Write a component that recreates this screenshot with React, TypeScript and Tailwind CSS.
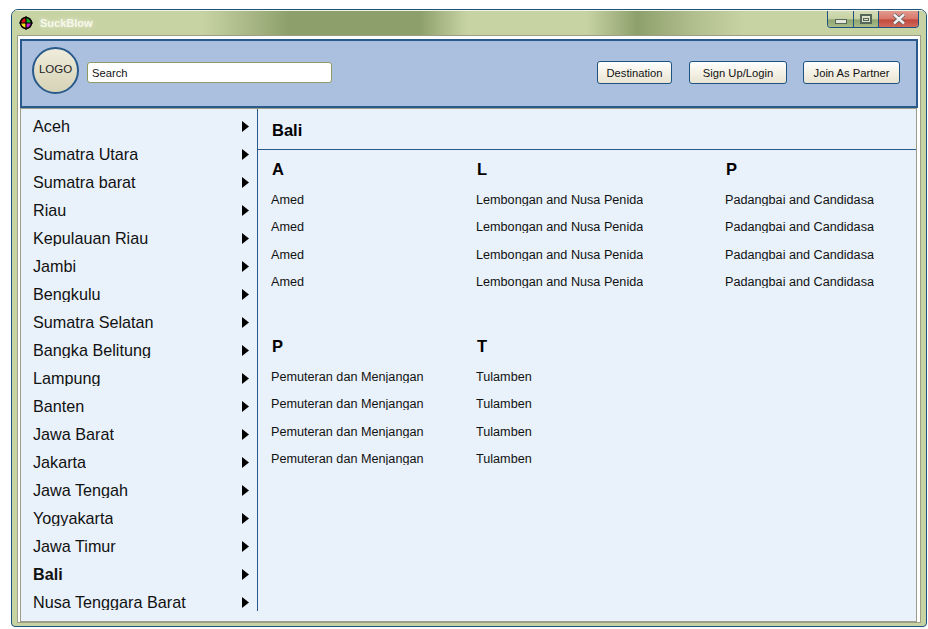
const provinces = ["Aceh","Sumatra Utara","Sumatra barat","Riau","Kepulauan Riau","Jambi","Bengkulu","Sumatra Selatan","Bangka Belitung","Lampung","Banten","Jawa Barat","Jakarta","Jawa Tengah","Yogyakarta","Jawa Timur","Bali","Nusa Tenggara Barat"];

const groups = [
  { letter: "A", item: "Amed" },
  { letter: "L", item: "Lembongan and Nusa Penida" },
  { letter: "P", item: "Padangbai and Candidasa" },
  { letter: "P", item: "Pemuteran dan Menjangan" },
  { letter: "T", item: "Tulamben" },
];

function AppIcon() {
  return (
    <svg width="14" height="14" viewBox="0 0 14 14">
      <path d="M7 7V1A6 6 0 0 0 1 7Z" fill="#e01010" />
      <path d="M7 7V1A6 6 0 0 1 13 7Z" fill="#10b020" />
      <path d="M7 7H1A6 6 0 0 0 7 13Z" fill="#f0e010" />
      <path d="M7 7H13A6 6 0 0 1 7 13Z" fill="#d020d0" />
      <circle cx="7" cy="7" r="5.5" fill="none" stroke="#000" strokeWidth="1.5" />
      <path d="M7 0V14M0 7H14" stroke="#000" strokeWidth="1.2" />
    </svg>
  );
}

function WindowControls() {
  return (
    <div className="flex h-[17px] self-start mr-[7px] border border-t-0 border-[#1d5380] rounded-b-[4px] overflow-hidden">
      <div className="w-[25px] flex items-end justify-center pb-[3px] bg-[linear-gradient(#d3dcb6_0%,#c6d1a2_50%,#8fa56f_55%,#a9ba86_100%)]">
        <div className="w-[12px] h-[5px] bg-[#e6e6dc] border border-[#5a6a5a]" />
      </div>
      <div className="w-[25px] flex items-center justify-center border-l border-[#1d5380] bg-[linear-gradient(#d3dcb6_0%,#c6d1a2_50%,#8fa56f_55%,#a9ba86_100%)]">
        <div className="w-[12px] h-[10px] border-2 border-[#55665a] flex items-center justify-center bg-[#dfe3cd]">
          <div className="w-[6px] h-[3px] border border-[#55665a]" />
        </div>
      </div>
      <div className="w-[40px] flex items-center justify-center border-l border-[#1d5380] bg-[linear-gradient(#e29a8e_0%,#d8776a_50%,#c0493c_55%,#d16a5c_100%)]">
        <svg width="14" height="12" viewBox="0 0 14 12">
          <path d="M2 1.5 12 10.5M12 1.5 2 10.5" stroke="#5f5f5f" strokeWidth="4" />
          <path d="M2 1.5 12 10.5M12 1.5 2 10.5" stroke="#f1f1f1" strokeWidth="2.4" />
        </svg>
      </div>
    </div>
  );
}

function HeaderButton({ label, width }: { label: string; width: string }) {
  return (
    <button className={`${width} h-[23px] pt-px border border-[#1d5380] rounded-[3px] text-[11.2px] text-[#111] bg-[linear-gradient(#ffffff_0%,#f5f2e8_45%,#e9e4d2_100%)]`}>
      {label}
    </button>
  );
}

function Group({ letter, item }: { letter: string; item: string }) {
  return (
    <div>
      <div className="h-[20px] pl-px text-[16.5px] leading-[20px] font-bold text-black mb-[7px]">{letter}</div>
      {[0, 1, 2, 3].map((i) => (
        <div key={i} className="h-[27.33px] flex items-center text-[12.65px] text-[#111]">
          <span className="block h-[13px] leading-[14px] overflow-hidden whitespace-nowrap">{item}</span>
        </div>
      ))}
    </div>
  );
}

export default function App() {
  return (
    <div className="h-[629px] w-[928px] bg-white pl-[11px] pt-[9px] font-['Liberation_Sans',Arial,sans-serif] overflow-hidden">
      <div className="w-[916px] h-[618px] flex flex-col border border-[#1d5380] rounded-t-[7px] rounded-b-[4px] bg-[#c8d3a4] overflow-hidden">
        <div className="h-[25px] shrink-0 flex items-center justify-between border-t border-[#f0f4e2] bg-[linear-gradient(90deg,#c8d3a4_0px,#c8d3a4_190px,#8da06c_277px,#8da06c_408px,#c8d3a4_455px,#c8d3a4_574px,#8da06c_625px,#b0bd8d_680px,#c8d3a4_732px,#c8d3a4_100%)]">
          <div className="flex items-center pl-[7px] gap-[7px]">
            <AppIcon />
            <span className="text-[11px] font-bold text-[#f6f8ea] [text-shadow:0_0_4px_#e8ecd8]">SuckBlow</span>
          </div>
          <WindowControls />
        </div>

        <div className="mx-[5px] mb-[3px] flex-1 min-h-0 flex flex-col border border-[#9d9d88] bg-white pt-[3px] pl-[2px] pr-[2px]">
          <header className="h-[69px] shrink-0 flex items-center justify-between border-2 border-[#2a5a8c] bg-[#abc0de] pl-[10px] pr-[16px] pb-[2px]">
            <div className="flex items-center gap-[8px]">
              <div className="w-[47px] h-[47px] mb-[5px] rounded-full border-2 border-[#2a5a8c] bg-[linear-gradient(#efecdc,#d6d3b6)] flex items-center justify-center text-[11.5px] text-[#222]">
                LOGO
              </div>
              <input
                readOnly
                value="Search"
                className="w-[245px] h-[21px] rounded-[3px] border border-[#8f9a63] bg-white pl-[4px] text-[11.2px] text-[#111] outline-none"
              />
            </div>
            <div className="flex items-center gap-[16px]">
              <HeaderButton label="Destination" width="w-[75px]" />
              <HeaderButton label="Sign Up/Login" width="w-[98px] ml-px" />
              <HeaderButton label="Join As Partner" width="w-[97px]" />
            </div>
          </header>

          <main className="flex-1 min-h-0 mr-px flex items-start border border-[#9d9d88] bg-[#e9f1fb]">
            <nav className="w-[237px] h-[502px] shrink-0 border-r border-[#2a5a8c] overflow-hidden pt-[3px] pl-[12px] pr-[8px]">
              {provinces.map((p) => (
                <div key={p} className="h-[28px] flex items-center justify-between">
                  <span className={`block h-[17px] mb-[2px] leading-[18px] overflow-hidden text-[16.2px] text-[#111] ${p === "Bali" ? "font-bold" : ""}`}>{p}</span>
                  <svg width="7" height="11" viewBox="0 0 7 11" className="shrink-0">
                    <path d="M0 0 7 5.5 0 11Z" fill="#000" />
                  </svg>
                </div>
              ))}
            </nav>

            <section className="flex-1 min-w-0">
              <div className="h-[41px] pl-[14px] pt-[2px] flex items-center border-b border-[#2a5a8c] text-[16.5px] font-bold text-black">Bali</div>
              <div className="pt-[9px] pl-[13px] grid grid-cols-[205px_249px_1fr] gap-y-[40.68px]">
                {groups.map((g, i) => (
                  <Group key={i} letter={g.letter} item={g.item} />
                ))}
              </div>
            </section>
          </main>
        </div>
      </div>
    </div>
  );
}
